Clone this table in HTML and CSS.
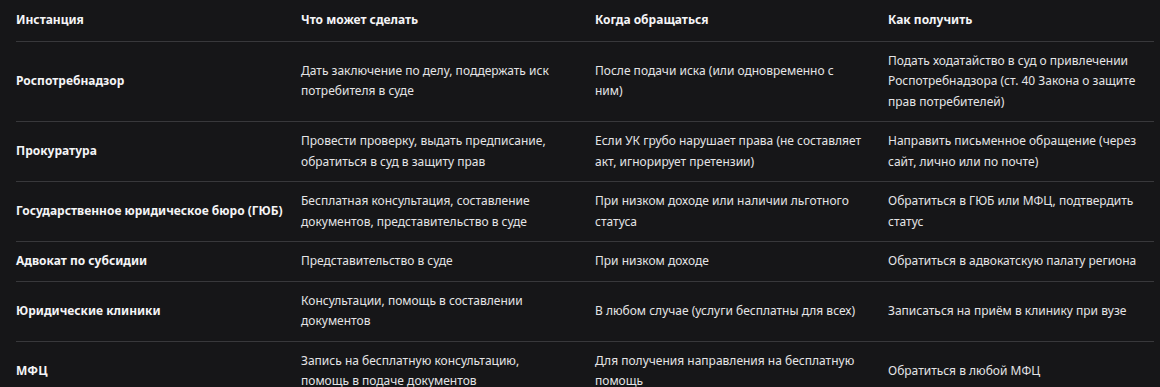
FILE: index.html
```html
<!DOCTYPE html>
<html lang="ru">
<head>
<meta charset="utf-8">
<title>Инстанции</title>
<link rel="stylesheet" href="styles.css">
</head>
<body>
<table class="grid">
  <colgroup>
    <col class="c1"><col class="c2"><col class="c3"><col class="c4">
  </colgroup>
  <thead>
    <tr><th>Инстанция</th><th>Что может сделать</th><th>Когда обращаться</th><th>Как получить</th></tr>
  </thead>
  <tbody>
    <tr><td>Роспотребнадзор</td><td>Дать заключение по делу, поддержать иск потребителя в суде</td><td>После подачи иска (или одновременно с ним)</td><td>Подать ходатайство в суд о привлечении Роспотребнадзора (ст. 40 Закона о защите прав потребителей)</td></tr>
    <tr><td>Прокуратура</td><td>Провести проверку, выдать предписание, обратиться в суд в защиту прав</td><td>Если УК грубо нарушает права (не составляет акт, игнорирует претензии)</td><td>Направить письменное обращение (через сайт, лично или по почте)</td></tr>
    <tr><td>Государственное юридическое бюро (ГЮБ)</td><td>Бесплатная консультация, составление документов, представительство в суде</td><td>При низком доходе или наличии льготного статуса</td><td>Обратиться в ГЮБ или МФЦ, подтвердить статус</td></tr>
    <tr><td>Адвокат по субсидии</td><td>Представительство в суде</td><td>При низком доходе</td><td>Обратиться в адвокатскую палату региона</td></tr>
    <tr><td>Юридические клиники</td><td>Консультации, помощь в составлении документов</td><td>В любом случае (услуги бесплатны для всех)</td><td>Записаться на приём в клинику при вузе</td></tr>
    <tr><td>МФЦ</td><td>Запись на бесплатную консультацию, помощь в подаче документов</td><td>Для получения направления на бесплатную помощь</td><td>Обратиться в любой МФЦ</td></tr>
  </tbody>
</table>
</body>
</html>
```
FILE: styles.css
```css
html, body {
  margin: 0;
  padding: 0;
  background: #161618;
}
body {
  font-family: "Noto Sans", "Open Sans", sans-serif;
  font-size: 12px;
  color: #e4e4e6;
  overflow: hidden;
}
.grid {
  margin-left: 16px;
  width: 1138px;
  border-collapse: collapse;
  table-layout: fixed;
}
.c1 { width: 285px; }
.c2 { width: 294px; }
.c3 { width: 293px; }
.c4 { width: 266px; }
.grid th, .grid td {
  text-align: left;
  vertical-align: middle;
  padding: 9px 16px 9px 0;
  line-height: 20.5px;
  border-bottom: 1px solid #38383b;
}
.grid td:nth-child(2) { padding-right: 34px; }
.grid td:nth-child(3) { padding-right: 27px; }
.grid th:last-child, .grid td:last-child { padding-right: 0; }
.grid th {
  padding-top: 10px;
  padding-bottom: 10px;
  font-weight: 700;
  color: #f4f4f6;
}
.grid td:first-child {
  font-weight: 700;
  color: #f4f4f6;
}
```
